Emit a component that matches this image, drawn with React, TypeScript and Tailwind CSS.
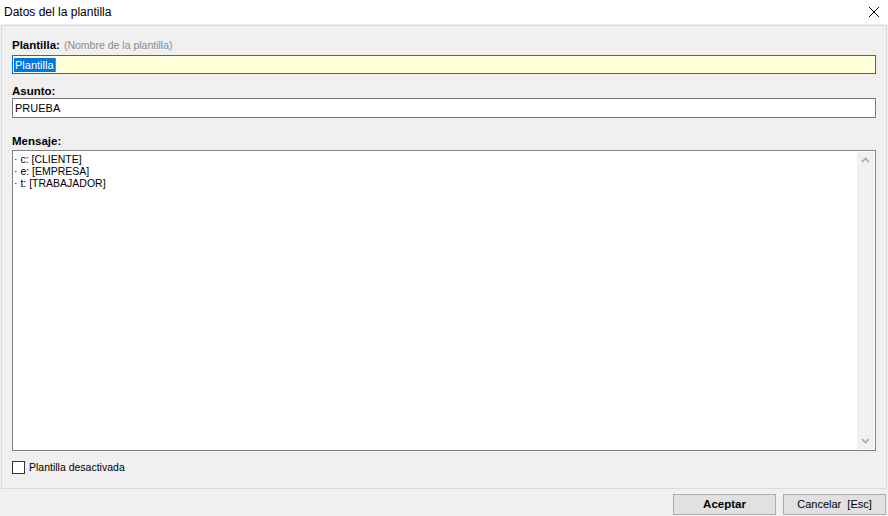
import React from 'react';

const font = { fontFamily: '"Liberation Sans", Arial, sans-serif' };

const IconClose = () => (
  <svg width="12" height="12" viewBox="0 0 12 12" fill="none" stroke="#000" strokeWidth="1">
    <path d="M1 1 L11 11 M11 1 L1 11" />
  </svg>
);

const Chevron = ({ up }: { up?: boolean }) => (
  <svg width="9" height="6" viewBox="0 0 9 6" fill="none" stroke="#a6a6a6" strokeWidth="1.6">
    {up ? <path d="M1 5 L4.5 1.5 L8 5" /> : <path d="M1 1 L4.5 4.5 L8 1" />}
  </svg>
);

export default function App() {
  return (
    <div className="w-[888px] h-[516px] flex flex-col bg-[#f0f0f0] text-black overflow-hidden" style={font}>
      {/* title bar */}
      <div className="h-[24px] bg-white flex items-center justify-between pl-[4px] pr-[8px]">
        <span className="text-[12px] leading-none">Datos del la plantilla</span>
        <IconClose />
      </div>

      {/* main panel */}
      <div className="mt-[1px] ml-[1px] w-[886px] h-[464px] border border-[#dadada] px-[10px] pt-[13px] flex flex-col">
        <div className="h-[13px] leading-[13px] text-[11px] flex items-baseline gap-[4px]">
          <span className="font-bold text-[11.5px]">Plantilla:</span>
          <span className="text-[#8a8a8a] text-[10.5px]">(Nombre de la plantilla)</span>
        </div>
        <div className="mt-[3px] h-[19px] border border-[#0078d7] bg-[#fefed8] flex items-center pl-[1px]">
          <span className="bg-[#0078d7] text-white text-[11px] leading-[14px] px-[1px] border-r border-[#e86d1f]">Plantilla</span>
        </div>

        <div className="mt-[11px] h-[13px] leading-[13px] text-[11.5px] font-bold">Asunto:</div>
        <div className="mt-[0px] h-[20px] border border-[#7a7a7a] bg-white flex items-center pl-[2px]">
          <span className="text-[11px]">PRUEBA</span>
        </div>

        <div className="mt-[17px] h-[13px] leading-[13px] text-[11.5px] font-bold">Mensaje:</div>
        <div className="mt-[2px] h-[301px] border border-[#828282] bg-white flex">
          <div className="flex-1 pl-[1px] pt-[2px] text-[10.5px] leading-[12px]">
            <div>· c: [CLIENTE]</div>
            <div>· e: [EMPRESA]</div>
            <div>· t: [TRABAJADOR]</div>
          </div>
          <div className="w-[17px] mr-[1px] my-[1px] bg-[#f0f0f0] flex flex-col items-center justify-between py-[5px]">
            <Chevron up />
            <Chevron />
          </div>
        </div>

        <div className="mt-[10px] flex items-center gap-[4px]">
          <div className="w-[13px] h-[13px] border border-[#333] bg-white" />
          <span className="text-[10.5px] leading-[13px]">Plantilla desactivada</span>
        </div>
      </div>

      {/* footer buttons */}
      <div className="flex justify-end gap-[7px] pr-[2px] mt-[5px]">
        <div className="w-[103px] h-[21px] bg-[#e1e1e1] border border-[#adadad] flex items-center justify-center text-[11.5px] font-bold">
          Aceptar
        </div>
        <div className="w-[103px] h-[21px] bg-[#e1e1e1] border border-[#adadad] flex items-center justify-center text-[11px]">
          Cancelar&nbsp;&nbsp;[Esc]
        </div>
      </div>
    </div>
  );
}
